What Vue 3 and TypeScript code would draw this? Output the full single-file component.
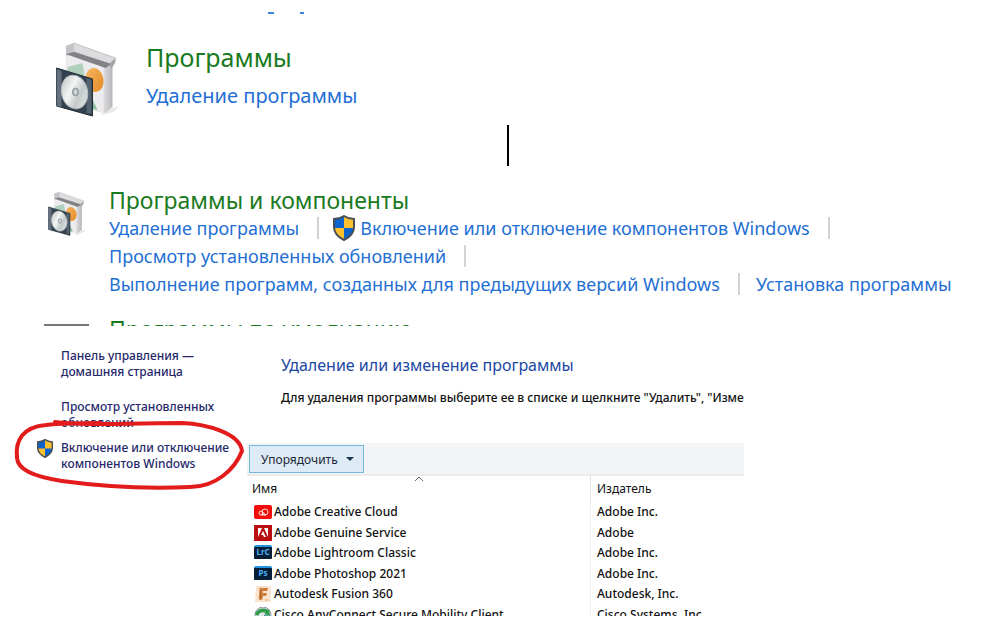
<script setup lang="ts">
interface Program {
  name: string
  publisher: string
  icon: 'cc' | 'adobe' | 'lrc' | 'ps' | 'fusion' | 'cisco'
}

const programs: Program[] = [
  { name: 'Adobe Creative Cloud', publisher: 'Adobe Inc.', icon: 'cc' },
  { name: 'Adobe Genuine Service', publisher: 'Adobe', icon: 'adobe' },
  { name: 'Adobe Lightroom Classic', publisher: 'Adobe Inc.', icon: 'lrc' },
  { name: 'Adobe Photoshop 2021', publisher: 'Adobe Inc.', icon: 'ps' },
  { name: 'Autodesk Fusion 360', publisher: 'Autodesk, Inc.', icon: 'fusion' },
  { name: 'Cisco AnyConnect Secure Mobility Client', publisher: 'Cisco Systems, Inc.', icon: 'cisco' },
]
</script>

<template>
  <main class="page">
    <!-- Shared artwork, reused at several sizes -->
    <svg class="defs" aria-hidden="true">
      <defs>
        <linearGradient id="disc" x1="0" y1="0" x2="1" y2="1">
          <stop offset="0" stop-color="#b9bdbd" />
          <stop offset="0.4" stop-color="#f3f5f4" />
          <stop offset="0.65" stop-color="#c4caca" />
          <stop offset="1" stop-color="#eceeee" />
        </linearGradient>
        <linearGradient id="side" x1="0" y1="0" x2="1" y2="0">
          <stop offset="0" stop-color="#dcdcde" />
          <stop offset="1" stop-color="#b7b7ba" />
        </linearGradient>
        <linearGradient id="orange" x1="0" y1="0" x2="1" y2="1">
          <stop offset="0" stop-color="#f7b763" />
          <stop offset="1" stop-color="#e58a22" />
        </linearGradient>
      </defs>
      <symbol id="box" viewBox="0 0 64 76">
        <path d="M52 68l12-4-6 6-14 4z" fill="#e9e9e9" />
        <path d="M10 12l40 14v46L10 62z" fill="#ececee" />
        <path d="M48 22l9-4v47l-9 7z" fill="url(#side)" />
        <path d="M12 25l15-4 3 19-18 2z" fill="#b0d0bd" />
        <path d="M36 55l6 13-10-2z" fill="#8bc3a0" />
        <ellipse cx="39" cy="38" rx="9" ry="12" transform="rotate(-10 39 38)" fill="url(#orange)" />
        <path d="M18 1l42 15-6 6-36-12z" fill="#dcdcde" stroke="#c3c3c6" stroke-width="1" />
        <path d="M10 4l8-3 1 10-8 3z" fill="#c4c4c7" />
        <path d="M10 12l9-2 37 12-6 4z" fill="#828286" />
        <path d="M54 22l6-6v4l-4 7z" fill="#a4a4a8" />
        <path d="M1 26l36 11v37L1 64z" fill="#34414f" stroke="#202b36" stroke-width="1" />
        <path d="M1 27l5 2v36l-5-1z" fill="#64717e" />
        <path d="M31 36l5 2v34l-5-1z" fill="#536370" />
        <ellipse cx="19" cy="50" rx="13" ry="17" transform="rotate(-12 19 50)" fill="url(#disc)" stroke="#b7bcbe" />
        <ellipse cx="20" cy="50" rx="3" ry="4" fill="#b4bbbe" stroke="#8b959a" />
        <ellipse cx="20" cy="50" rx="1" ry="2" fill="#e3e7e8" />
      </symbol>
      <symbol id="shield" viewBox="0 0 24 26">
        <path d="M12 1c3 2 6 3 10 3v8c0 6-4 10-10 13C6 22 2 18 2 12V4c4 0 7-1 10-3z" fill="#fbc02d" />
        <path d="M12 1v12H2V4c4 0 7-1 10-3zM12 13h10c-1 6-4 9-10 12z" fill="#0b63ce" />
        <path d="M12 1c3 2 6 3 10 3v8c0 6-4 10-10 13C6 22 2 18 2 12V4c4 0 7-1 10-3z" fill="none" stroke="#4b4f55" stroke-width="2" />
      </symbol>
    </svg>

    <section class="category">
      <svg class="clipped-line" viewBox="0 0 40 3" aria-hidden="true">
        <path d="M1 1h6M33 1h4" stroke="#3b83dc" stroke-width="2" />
      </svg>
      <div class="category-body">
        <svg class="box-large" aria-hidden="true"><use href="#box" /></svg>
        <div>
          <h1>Программы</h1>
          <a class="category-link" href="#">Удаление программы</a>
        </div>
      </div>
    </section>

    <div class="caret"></div>

    <section class="components">
      <svg class="box-small" aria-hidden="true"><use href="#box" /></svg>
      <div class="components-body">
        <h2>Программы и компоненты</h2>
        <div class="links">
          <a href="#">Удаление программы</a>
          <i class="sep"></i>
          <svg class="shield" aria-hidden="true"><use href="#shield" /></svg>
          <a href="#">Включение или отключение компонентов Windows</a>
          <i class="sep"></i>
        </div>
        <div class="links">
          <a href="#">Просмотр установленных обновлений</a>
          <i class="sep"></i>
        </div>
        <div class="links">
          <a href="#">Выполнение программ, созданных для предыдущих версий Windows</a>
          <i class="sep"></i>
          <a href="#">Установка программы</a>
        </div>
      </div>
    </section>

    <section class="defaults">
      <div class="icon-edge"></div>
      <h2>Программы по умолчанию</h2>
    </section>

    <section class="window">
      <nav class="side">
        <a href="#">Панель управления —<br />домашняя страница</a>
        <a href="#">Просмотр установленных<br />обновлений</a>
        <a class="marked" href="#">
          <svg class="shield-small" aria-hidden="true"><use href="#shield" /></svg>
          Включение или отключение<br />компонентов Windows
        </a>
      </nav>
      <div class="content">
        <header>
          <h3>Удаление или изменение программы</h3>
          <p>Для удаления программы выберите ее в списке и щелкните "Удалить", "Изме</p>
        </header>
        <div class="toolbar">
          <button type="button">
            Упорядочить
            <svg viewBox="0 0 10 6" width="10" height="6" aria-hidden="true"><path d="M1 1h8L5 5z" fill="#1d3557" /></svg>
          </button>
        </div>
        <table>
          <thead>
            <tr>
              <th scope="col">
                Имя
                <svg class="sort" viewBox="0 0 10 6" aria-hidden="true"><path d="M1 5l4-4 4 4" fill="none" stroke="#6c6c6c" /></svg>
              </th>
              <th scope="col">Издатель</th>
            </tr>
          </thead>
          <tbody>
            <tr v-for="program in programs" :key="program.name">
              <td>
                <div class="name">
                  <svg class="app-icon" viewBox="0 0 18 16" aria-hidden="true">
                    <g v-if="program.icon === 'cc'">
                      <rect y="1" width="18" height="14" rx="2" fill="#f20d0a" />
                      <circle cx="7" cy="9" r="2" fill="none" stroke="#ffe3e0" />
                      <circle cx="11" cy="8" r="3" fill="none" stroke="#ffe3e0" />
                      <path d="M7 11h5M8 8l3 2" stroke="#ffe3e0" />
                    </g>
                    <g v-else-if="program.icon === 'adobe'">
                      <rect width="18" height="16" fill="#b90f12" />
                      <path d="M4 3h4L4 12zM10 3h4v9zM9 6l3 6h-2l-1-2H7z" fill="#fff" />
                    </g>
                    <g v-else-if="program.icon === 'lrc'">
                      <rect width="18" height="14" rx="2" fill="#2193e0" />
                      <rect y="2" width="18" height="12" rx="1" fill="#061e36" />
                      <text class="badge" x="9" y="10" text-anchor="middle">LrC</text>
                    </g>
                    <g v-else-if="program.icon === 'ps'">
                      <rect width="18" height="14" rx="2" fill="#2193e0" />
                      <rect y="2" width="18" height="12" rx="1" fill="#061e36" />
                      <text class="badge" x="9" y="10" text-anchor="middle">Ps</text>
                    </g>
                    <g v-else-if="program.icon === 'fusion'">
                      <path d="M2 0h15v16H1z" fill="#fae3cd" />
                      <path d="M6 2h8l-1 3H9v2h4l-1 3H9l-1 4H5z" fill="#cc7a32" />
                      <path d="M6 2h2v11H5zM11 14h3" fill="#a9571b" stroke="#dba06b" />
                    </g>
                    <g v-else>
                      <circle cx="9" cy="8" r="8" fill="#dfe7ea" stroke="#8b979c" />
                      <path d="M1 7C3 2 9 0 14 3l1-1 1 7-6-2 2-1C8 4 5 6 4 9z" fill="#2e9c48" />
                      <path d="M10 8l7 1-3 6-4-1z" fill="#2b8a9d" />
                    </g>
                  </svg>
                  {{ program.name }}
                </div>
              </td>
              <td>{{ program.publisher }}</td>
            </tr>
          </tbody>
        </table>
      </div>
      <!-- Hand-drawn highlight round the Windows features link -->
      <svg class="marker" viewBox="0 0 236 76" aria-hidden="true">
        <path d="M43 6C74 10 108 7 170 7C194 8 228 17 230 35C223 53 204 71 178 71C130 73 86 70 50 65C19 60 6 53 5 42C3 24 11 11 34 9C52 7 66 7 89 7" fill="none" stroke="#e21b1b" stroke-width="4" stroke-linecap="round" stroke-linejoin="round" />
      </svg>
    </section>
  </main>
</template>

<style>
body {
  background: #fff;
}
</style>

<style scoped>
.page {
  font-family: "Noto Sans", "Open Sans", sans-serif;
  color: #111;
  overflow: hidden;
}

.defs {
  display: block;
  width: 0;
  height: 0;
}

h1,
h2,
h3,
p {
  margin: 0;
  font-weight: 400;
}

a {
  color: #1f6fd4;
  text-decoration: none;
  white-space: nowrap;
}

h1,
h2 {
  color: #1a7a1e;
  white-space: nowrap;
}

.category {
  padding-top: 12px;
}

.clipped-line {
  display: block;
  width: 40px;
  height: 3px;
  margin-left: 267px;
}

.category-body {
  display: flex;
  gap: 26px;
  padding: 22px 0 0 55px;
}

.box-large {
  width: 65px;
  height: 76px;
  margin-top: 5px;
}

h1 {
  font-size: 25px;
  line-height: 40px;
}

.category-link {
  display: block;
  font-size: 20px;
  line-height: 38px;
}

.caret {
  width: 2px;
  height: 41px;
  margin: 7px auto 0 507px;
  background: #000;
}

.components {
  display: flex;
  gap: 23px;
  padding: 20px 0 0 48px;
}

.box-small {
  flex: none;
  width: 38px;
  height: 46px;
  margin-top: 5px;
}

h2 {
  font-size: 23px;
  line-height: 28px;
}

.links {
  display: flex;
  align-items: center;
  height: 28px;
  font-size: 18px;
}

.sep {
  width: 2px;
  height: 22px;
  margin: 0 16px 0 18px;
  background: #d3d3d3;
}

.shield {
  width: 24px;
  height: 26px;
  margin: 0 4px 0 -3px;
}

.defaults {
  display: flex;
  align-items: flex-start;
  gap: 20px;
  height: 11px;
  padding-left: 44px;
  margin-top: 17px;
  overflow: hidden;
}

.icon-edge {
  width: 45px;
  height: 2px;
  margin-top: 9px;
  background: #77777a;
}

.window {
  position: relative;
  display: flex;
  max-width: 744px;
  height: 290px;
  overflow: hidden;
}

.side {
  flex: none;
  display: flex;
  flex-direction: column;
  gap: 19px;
  width: 247px;
  box-sizing: border-box;
  padding: 22px 0 0 61px;
  font-size: 12px;
  font-weight: 500;
  line-height: 16px;
}

.side a {
  color: #26286b;
}

.side .marked {
  position: relative;
  margin-top: -10px;
}

.shield-small {
  position: absolute;
  left: -25px;
  top: -1px;
  width: 18px;
  height: 19px;
}

.marker {
  position: absolute;
  left: 12px;
  top: 90px;
  width: 236px;
  height: 76px;
}

.content {
  flex: 1;
  min-width: 0;
  font-size: 12px;
}

header {
  height: 117px;
  padding-left: 34px;
  box-sizing: border-box;
  overflow: hidden;
  white-space: nowrap;
}

h3 {
  padding-top: 26px;
  color: #1c47a3;
  font-size: 16px;
  line-height: 26px;
}

p {
  margin-top: 10px;
  font-weight: 500;
  line-height: 20px;
}

.toolbar {
  height: 33px;
  padding: 2px;
  box-sizing: border-box;
  border-bottom: 2px solid #ebebeb;
  background: #f3f4f6;
}

button {
  display: flex;
  align-items: center;
  gap: 7px;
  height: 28px;
  padding: 0 8px 0 11px;
  border: 1px solid #72b9dc;
  background: #dcebf4;
  color: #1c2638;
  font: inherit;
}

table {
  width: 100%;
  border-collapse: collapse;
  table-layout: fixed;
}

th,
td {
  height: 20px;
  padding: 0;
  text-align: left;
  font-weight: 400;
  line-height: 20px;
  white-space: nowrap;
}

td {
  font-weight: 500;
}

tbody tr:nth-child(even) td {
  height: 21px;
}

th {
  position: relative;
  height: 26px;
  padding-left: 5px;
}

th:first-child {
  width: 338px;
}

th:last-child,
td:last-child {
  padding-left: 6px;
  border-left: 1px solid #e2e2e2;
}

td:last-child {
  border-color: #e8f2fa;
}

.sort {
  position: absolute;
  left: 167px;
  top: 0;
  width: 10px;
  height: 6px;
}

.name {
  display: flex;
  align-items: center;
  gap: 2px;
  padding-left: 7px;
}

.app-icon {
  width: 18px;
  height: 16px;
}

.badge {
  fill: #4cb4ff;
  font-size: 8px;
  font-weight: 700;
}
</style>
